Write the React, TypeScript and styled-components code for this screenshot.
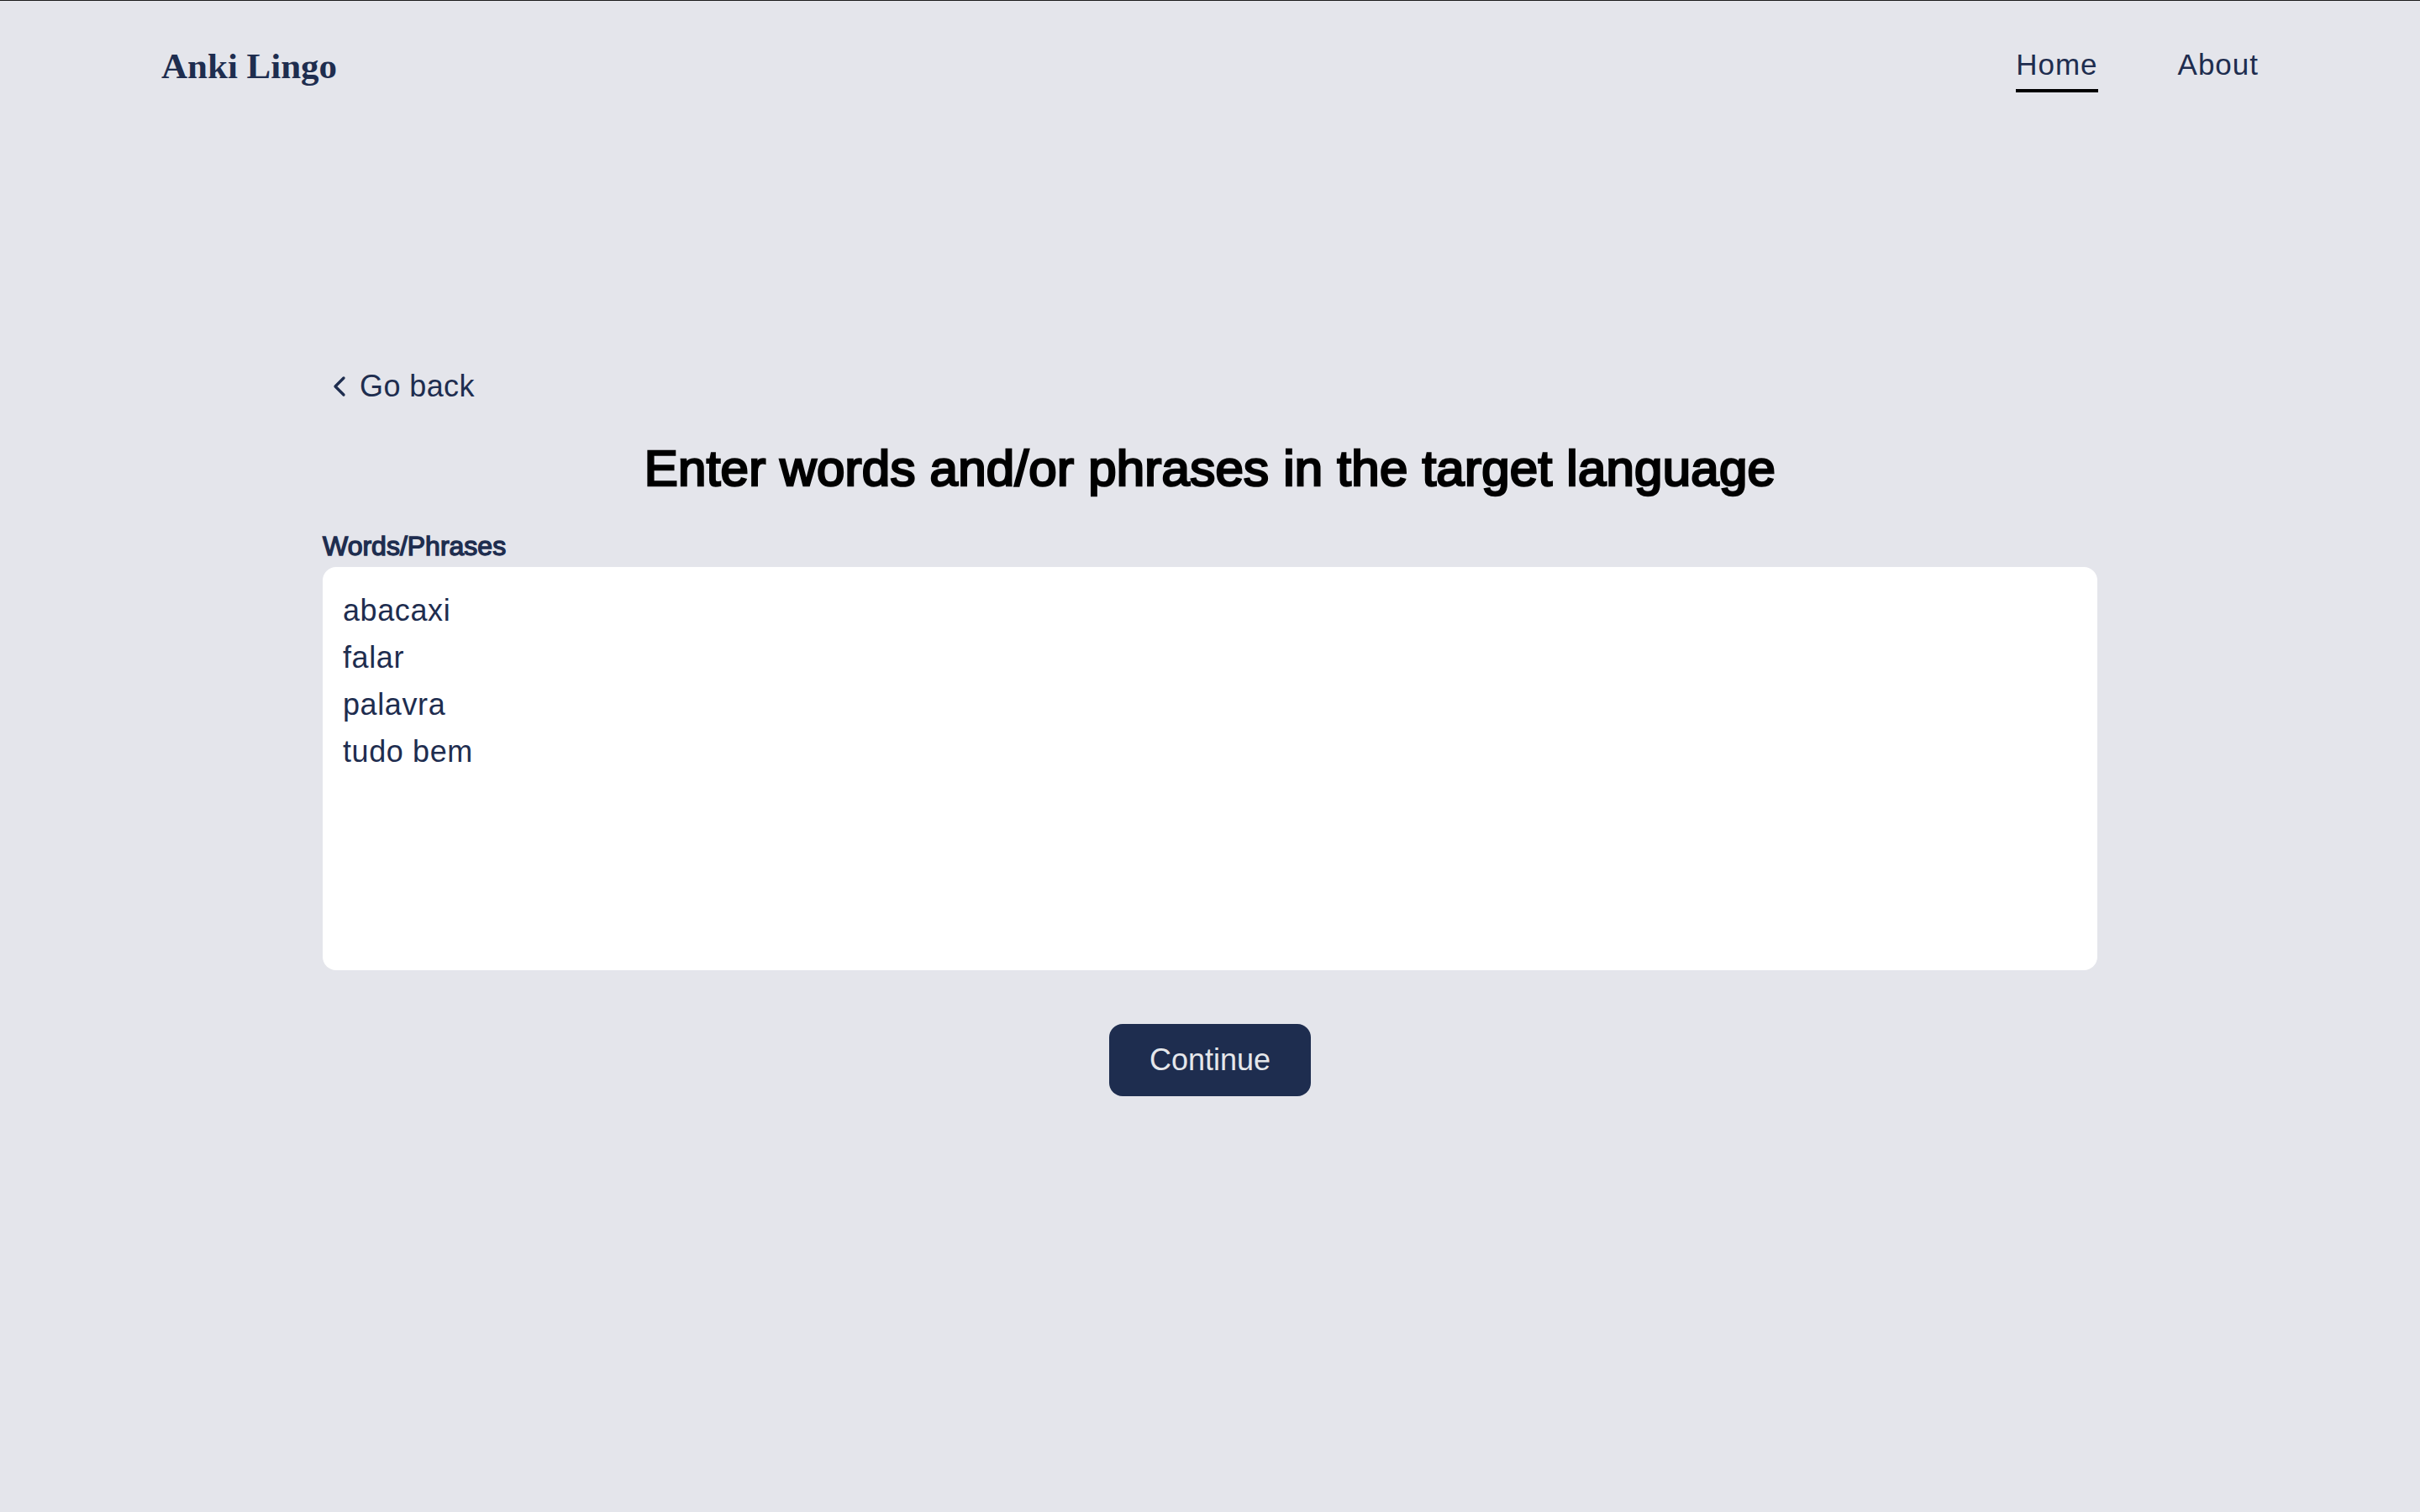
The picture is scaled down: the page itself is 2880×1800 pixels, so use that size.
import React from "react";
import styled, { createGlobalStyle } from "styled-components";
import { ChevronLeft } from "lucide-react";

const NAVY = "#1e2d4f";

const GlobalStyle = createGlobalStyle`
  html, body {
    margin: 0;
    padding: 0;
    background: #e4e5eb;
  }
  body {
    font-family: "Liberation Sans", Arial, sans-serif;
    color: ${NAVY};
  }
  * {
    box-sizing: border-box;
  }
`;

const Page = styled.div`
  min-height: 100vh;
  border-top: 1px solid #1c1c1c;
  background: #e4e5eb;
`;

const Header = styled.header`
  display: flex;
  justify-content: space-between;
  align-items: flex-start;
  padding: 57px 192px 0;
`;

const Logo = styled.a`
  font-family: "Liberation Serif", "Times New Roman", serif;
  font-weight: 700;
  font-size: 43px;
  line-height: 42px;
  color: ${NAVY};
  text-decoration: none;
`;

const Nav = styled.nav`
  display: flex;
  gap: 95px;
  margin-top: 1px;
`;

const NavLink = styled.a<{ $active?: boolean }>`
  font-size: 35px;
  line-height: 35px;
  padding-bottom: 12px;
  border-bottom: 4px solid ${(p) => (p.$active ? "#000" : "transparent")};
  color: ${NAVY};
  text-decoration: none;
  letter-spacing: 1px;
`;

const Main = styled.main`
  width: 2112px;
  margin: 0 auto;
  padding-top: 330px;
  display: flex;
  flex-direction: column;
`;

const BackLink = styled.a`
  align-self: flex-start;
  display: inline-flex;
  align-items: center;
  gap: 4px;
  height: 40px;
  font-size: 36px;
  line-height: 38px;
  letter-spacing: 0.4px;
  color: ${NAVY};
  text-decoration: none;
`;

const Heading = styled.h1`
  margin: 48px 0 46px;
  font-size: 60px;
  line-height: 60px;
  font-weight: 400;
  letter-spacing: 0.25px;
  text-align: center;
  color: #000;
  -webkit-text-stroke: 2.6px #000;
`;

const Label = styled.label`
  display: block;
  font-size: 32px;
  line-height: 32px;
  margin-bottom: 9px;
  color: ${NAVY};
  -webkit-text-stroke: 1.4px ${NAVY};
`;

const WordsArea = styled.textarea`
  display: block;
  width: 100%;
  height: 480px;
  padding: 24px 24px 22px;
  border: none;
  border-radius: 16px;
  background: #fff;
  font-family: "Liberation Sans", Arial, sans-serif;
  font-size: 36px;
  line-height: 56px;
  letter-spacing: 0.6px;
  color: ${NAVY};
  resize: none;
  outline: none;
`;

const ContinueButton = styled.button`
  align-self: center;
  margin-top: 64px;
  height: 86px;
  padding: 0 48px;
  border: none;
  border-radius: 16px;
  background: ${NAVY};
  color: #e5e7eb;
  font-family: "Liberation Sans", Arial, sans-serif;
  font-size: 36px;
  cursor: pointer;
`;

export default function App() {
  return (
    <>
      <GlobalStyle />
      <Page>
        <Header>
          <Logo href="#">Anki Lingo</Logo>
          <Nav>
            <NavLink href="#" $active>
              Home
            </NavLink>
            <NavLink href="#">About</NavLink>
          </Nav>
        </Header>
        <Main>
          <BackLink href="#">
            <ChevronLeft size={40} strokeWidth={2} color={NAVY} />
            Go back
          </BackLink>
          <Heading>Enter words and/or phrases in the target language</Heading>
          <Label htmlFor="words">Words/Phrases</Label>
          <WordsArea
            id="words"
            defaultValue={"abacaxi\nfalar\npalavra\ntudo bem"}
          />
          <ContinueButton>Continue</ContinueButton>
        </Main>
      </Page>
    </>
  );
}
